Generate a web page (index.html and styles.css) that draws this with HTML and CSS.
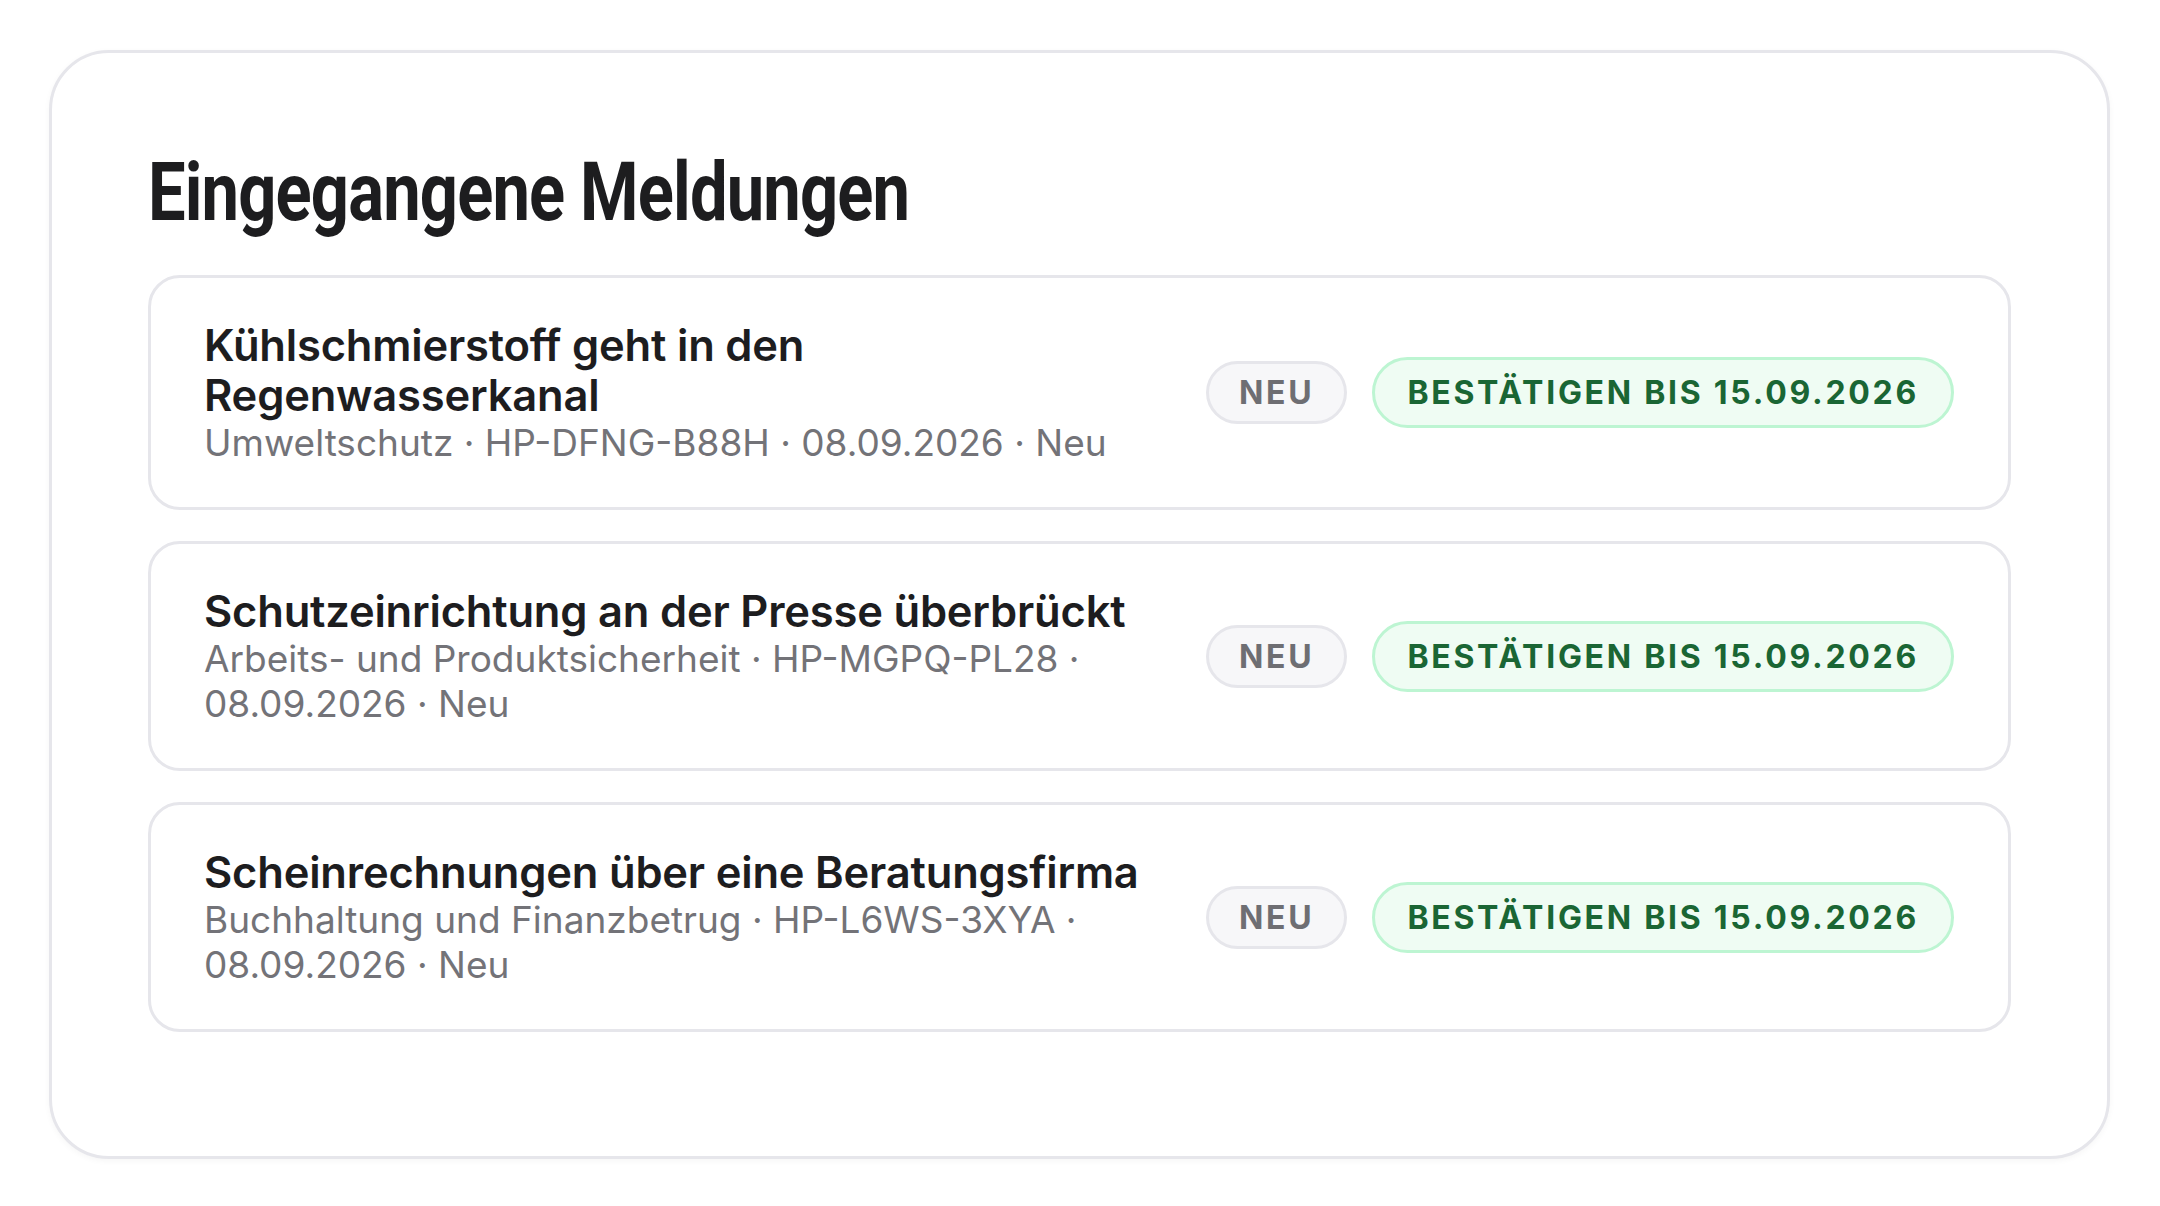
FILE: index.html
```html
<!DOCTYPE html>
<html lang="de">
<head>
    <meta charset="UTF-8">
    <meta name="viewport" content="width=device-width, initial-scale=1.0">
    <title>Eingegangene Meldungen</title>
    <link rel="stylesheet" href="styles.css">
</head>
<body>
    <div class="panel">
        <h1 class="panel-title"><span class="panel-title-text">Eingegangene Meldungen</span></h1>

        <div class="report-list">
            <div class="report-item">
                <div class="report-text">
                    <div class="report-title">Kühlschmierstoff geht in den Regenwasserkanal</div>
                    <div class="report-meta">Umweltschutz · HP-DFNG-B88H · 08.09.2026 · Neu</div>
                </div>
                <div class="report-tags">
                    <span class="tag tag-new">Neu</span>
                    <span class="tag tag-deadline">Bestätigen bis 15.09.2026</span>
                </div>
            </div>

            <div class="report-item">
                <div class="report-text">
                    <div class="report-title">Schutzeinrichtung an der Presse überbrückt</div>
                    <div class="report-meta">Arbeits- und Produktsicherheit · HP-MGPQ-PL28 · 08.09.2026 · Neu</div>
                </div>
                <div class="report-tags">
                    <span class="tag tag-new">Neu</span>
                    <span class="tag tag-deadline">Bestätigen bis 15.09.2026</span>
                </div>
            </div>

            <div class="report-item">
                <div class="report-text">
                    <div class="report-title">Scheinrechnungen über eine Beratungsfirma</div>
                    <div class="report-meta">Buchhaltung und Finanzbetrug · HP-L6WS-3XYA · 08.09.2026 · Neu</div>
                </div>
                <div class="report-tags">
                    <span class="tag tag-new">Neu</span>
                    <span class="tag tag-deadline">Bestätigen bis 15.09.2026</span>
                </div>
            </div>
        </div>
    </div>
</body>
</html>
```

FILE: styles.css
```css
* {
    font-family: Inter, "Noto Sans", Roboto, sans-serif;
    box-sizing: border-box;
}

body {
    margin: 0;
    padding: 50px 50px 50px 49px;
    background: #ffffff;
}

.panel {
    background: #ffffff;
    border: 3px solid #e6e6eb;
    border-radius: 60px;
    padding: 92px 96px 124px;
    box-shadow: 0 2px 6px rgba(0, 0, 0, 0.04);
}

.panel-title {
    margin: 0 0 34px;
    font-family: Roboto, "Liberation Sans", sans-serif;
    font-size: 81px;
    line-height: 96px;
    font-weight: 700;
    letter-spacing: -1px;
    color: #1d1d1f;
}

/* no condensed face installed, so squeeze the heading */
.panel-title-text {
    display: inline-block;
    font-family: inherit;
    transform: scaleX(0.825);
    transform-origin: left center;
    white-space: nowrap;
}

.report-list {
    display: flex;
    flex-direction: column;
    gap: 31px;
}

.report-item {
    display: flex;
    align-items: center;
    gap: 28px;
    padding: 42px 54px 42px 53px;
    border: 3px solid #e6e6eb;
    border-radius: 32px;
    background: #ffffff;
}

.report-text {
    flex: 1;
    min-width: 0;
}

.report-title {
    font-size: 43.5px;
    line-height: 50px;
    font-weight: 600;
    letter-spacing: -0.2px;
    color: #1d1d1f;
}

.report-meta {
    font-size: 37px;
    line-height: 45px;
    color: #737378;
}

.report-tags {
    display: flex;
    align-items: center;
    gap: 25px;
    flex-shrink: 0;
}

.tag {
    border-radius: 999px;
    text-transform: uppercase;
    font-weight: 700;
    font-size: 32px;
    letter-spacing: 0.085em;
    white-space: nowrap;
}

.tag-new {
    padding: 9px 30px;
    background: #f7f7f9;
    border: 3px solid #e6e6eb;
    color: #6e6e73;
}

.tag-deadline {
    padding: 13px 32px;
    background: #effcf3;
    border: 3px solid #bdf5d2;
    color: #1a6634;
}
```
